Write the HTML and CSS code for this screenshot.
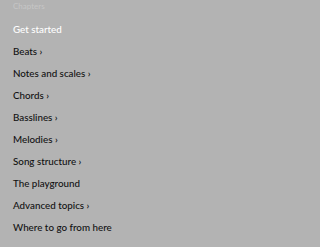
FILE: index.html
```html
<!DOCTYPE html>
<html>
<head>
<meta charset="utf-8">
<link rel="stylesheet" href="styles.css">
</head>
<body>
<nav class="chapters">
  <div class="heading">Chapters</div>
  <ul class="list">
    <li class="item current">Get started</li>
    <li class="item">Beats ›</li>
    <li class="item">Notes and scales ›</li>
    <li class="item">Chords ›</li>
    <li class="item">Basslines ›</li>
    <li class="item">Melodies ›</li>
    <li class="item">Song structure ›</li>
    <li class="item">The playground</li>
    <li class="item">Advanced topics ›</li>
    <li class="item">Where to go from here</li>
  </ul>
</nav>
</body>
</html>
```
FILE: styles.css
```css
html, body {
  margin: 0;
  padding: 0;
  background: #b3b3b3;
}
body {
  font-family: "Lato", "DejaVu Sans", sans-serif;
  color: #111111;
}
.chapters {
  padding: 0 0 0 13px;
}
.heading {
  font-size: 8px;
  line-height: 12px;
  color: #c6c6c6;
  margin-bottom: 6px;
}
.list {
  list-style: none;
  margin: 0;
  padding: 0;
}
.item {
  font-size: 9.8px;
  font-weight: 500;
  line-height: 22px;
  height: 22px;
}
.item.current {
  color: #ffffff;
}
```
